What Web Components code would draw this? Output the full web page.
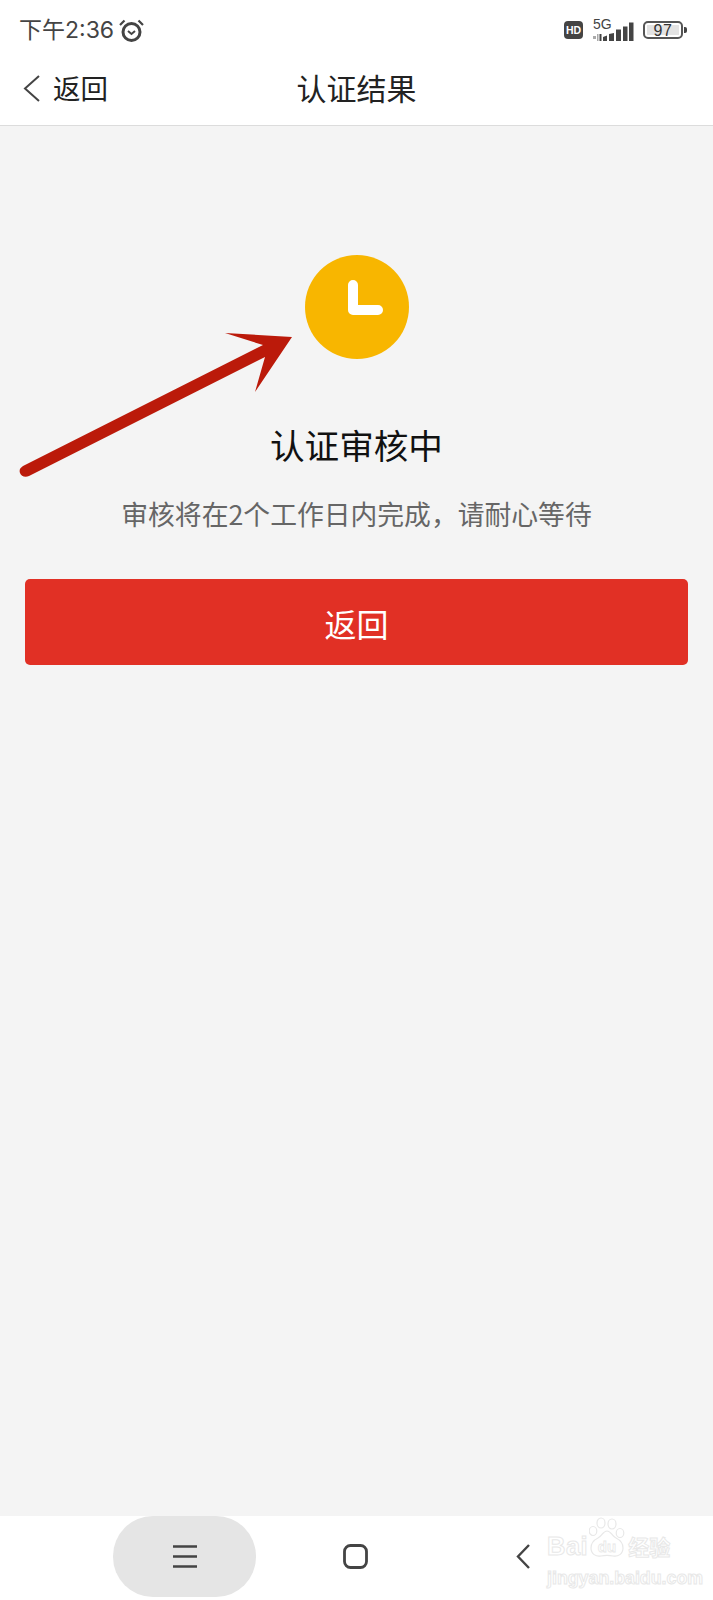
<!DOCTYPE html>
<html lang="zh">
<head>
<meta charset="utf-8">
<title>认证结果</title>
<style>
  html, body{
    margin: 0;
    padding: 0;
  }
  body{
    width: 713px;
    height: 1600px;
    overflow: hidden;
    font-family: "Noto Sans CJK SC", "Noto Sans", sans-serif;
  }
</style>
</head>
<body>
<app-screen>
  <status-bar time="下午2:36" battery="97"></status-bar>
  <nav-header heading="认证结果" back="返回"></nav-header>
  <result-panel heading="认证审核中" note="审核将在2个工作日内完成，请耐心等待">
    <primary-button>返回</primary-button>
  </result-panel>
  <bottom-nav></bottom-nav>
  <note-arrow></note-arrow>
</app-screen>

<script>
class AppScreen extends HTMLElement{
    constructor(){
        super();
        this.attachShadow({mode:"open"}).innerHTML = `
        <style>
          :host{
            display: flex;
            flex-direction: column;
            position: relative;
            width: 713px;
            height: 1600px;
            background: #f4f4f4;
          }
        </style>
        <slot></slot>`;
    }
}

class StatusBar extends HTMLElement{
    constructor(){
        super();
        this.attachShadow({mode:"open"}).innerHTML = `
        <style>
          :host{
            display: flex;
            justify-content: space-between;
            align-items: center;
            height: 60px;
            padding: 0 26px 0 19px;
            background: #fff;
            color: #444;
          }
          .left, .right{
            display: flex;
            align-items: center;
          }
          .time{
            font-family: Inter, "Noto Sans CJK SC", sans-serif;
            font-size: 23px;
            line-height: 60px;
            margin-top: -1px;
          }
          .alarm{
            margin-left: 5px;
            margin-top: 1px;
          }
          .hd{
            width: 19px;
            height: 18px;
            border-radius: 4px;
            background: #444;
            color: #fff;
            font: 700 10.500px/18px "Liberation Sans", sans-serif;
            text-align: center;
          }
          .net{
            display: block;
            margin: -3px 0 0 10px;
          }
          .battery{
            display: flex;
            align-items: center;
            margin-left: 9px;
          }
          .shell{
            box-sizing: border-box;
            width: 40px;
            height: 18px;
            padding: 2px;
            border: 2px solid #555;
            border-radius: 5px;
          }
          .level{
            height: 100%;
            background: #e3e3e3;
            font: 16px/11px "Liberation Sans", sans-serif;
            letter-spacing: .5px;
            color: #333;
            text-align: center;
          }
          .nub{
            width: 3px;
            height: 6px;
            margin-left: 1px;
            border-radius: 0 2px 2px 0;
            background: #444;
          }
        </style>
        <div class="left">
          <span class="time"></span>
          <svg class="alarm" width="25" height="24" viewBox="0 0 25 24" fill="none" stroke="#444">
            <circle cx="12.500" cy="13" r="8.500" stroke-width="3"/>
            <path d="M9 12l3.500 3 3.500-3" stroke-width="2"/>
            <path d="M1 6L5.500 1.500M24 6L19.500 1.500" stroke-width="2.200"/>
          </svg>
        </div>
        <div class="right">
          <div class="hd">HD</div>
          <svg class="net" width="41" height="26" viewBox="0 -3 41 26">
            <text x="0" y="9.500" font-size="14" font-family="Liberation Sans" fill="#444">5G</text>
            <path d="M0 17h3v3H0zM4 15h1.500v7H4z" fill="#aaa"/>
            <path d="M6.500 15h2v7h-2zM10 18l4-1.500V22h-4zM16 15l5-1v8h-5zM23 10.500h5V22h-5zM30 7.500h4.500V22H30zM36 3.500h4.500V22H36z" fill="#444"/>
          </svg>
          <div class="battery">
            <div class="shell"><div class="level"></div></div>
            <div class="nub"></div>
          </div>
        </div>`;
    }

    connectedCallback(){
        this.shadowRoot.querySelector(".time").textContent = this.getAttribute("time");
        this.shadowRoot.querySelector(".level").textContent = this.getAttribute("battery");
    }
}

class NavHeader extends HTMLElement{
    constructor(){
        super();
        this.attachShadow({mode:"open"}).innerHTML = `
        <style>
          :host{
            display: grid;
            grid-template-columns: 1fr auto 1fr;
            align-items: center;
            height: 53px;
            padding-bottom: 12px;
            background: #fff;
            border-bottom: 1px solid #dcdcdc;
            color: #222;
          }
          .back{
            display: flex;
            align-items: center;
            gap: 13px;
            padding-left: 23px;
            font-size: 27.500px;
          }
          .back svg{
            margin-top: 3px;
          }
          h1{
            margin: 0;
            font-size: 30px;
            font-weight: 400;
            color: #222;
          }
        </style>
        <div class="back">
          <svg width="17" height="27" viewBox="0 0 17 27" fill="none" stroke="#444" stroke-width="2">
            <path d="M16 1L2 13.500 16 26"/>
          </svg>
          <span class="label"></span>
        </div>
        <h1></h1>
        <div></div>`;
    }

    connectedCallback(){
        this.shadowRoot.querySelector(".label").textContent = this.getAttribute("back");
        this.shadowRoot.querySelector("h1").textContent = this.getAttribute("heading");
    }
}

class ResultPanel extends HTMLElement{
    constructor(){
        super();
        this.attachShadow({mode:"open"}).innerHTML = `
        <style>
          :host{
            display: flex;
            flex-direction: column;
            align-items: center;
            flex: 1;
            padding: 129px 25px 0;
          }
          svg{
            display: block;
          }
          h2{
            margin: 60px 0 0;
            font-size: 34.600px;
            line-height: 50px;
            font-weight: 400;
            color: #111;
          }
          p{
            margin: 25px 0 0;
            font-size: 26.800px;
            line-height: 40px;
            color: #666;
          }
          .action{
            align-self: stretch;
            margin-top: 45px;
          }
        </style>
        <svg width="104" height="104" viewBox="0 0 104 104">
          <circle cx="52" cy="52" r="52" fill="#f8b600"/>
          <path d="M48 30V55H73" fill="none" stroke="#fff" stroke-width="10" stroke-linecap="round" stroke-linejoin="round"/>
        </svg>
        <h2></h2>
        <p></p>
        <div class="action"><slot></slot></div>`;
    }

    connectedCallback(){
        this.shadowRoot.querySelector("h2").textContent = this.getAttribute("heading");
        this.shadowRoot.querySelector("p").textContent = this.getAttribute("note");
    }
}

class PrimaryButton extends HTMLElement{
    constructor(){
        super();
        this.attachShadow({mode:"open"}).innerHTML = `
        <style>
          :host{
            display: flex;
            justify-content: center;
            align-items: center;
            box-sizing: border-box;
            height: 86px;
            padding-top: 2px;
            border-radius: 5px;
            background: #e13025;
            color: #fff;
            font-size: 32px;
          }
        </style>
        <slot></slot>`;
    }
}

class BottomNav extends HTMLElement{
    constructor(){
        super();
        this.attachShadow({mode:"open"}).innerHTML = `
        <style>
          :host{
            display: block;
            position: relative;
            height: 84px;
            background: #fff;
          }
          .keys{
            display: grid;
            grid-template-columns: 143px 198px 1fr;
            height: 81px;
            padding-left: 113px;
          }
          .key{
            display: flex;
            justify-content: center;
            align-items: center;
          }
          .key.on{
            background: #e5e5e5;
            border-radius: 40px;
          }
          .key:last-child{
            justify-content: flex-start;
            padding-left: 62px;
          }
          .mark{
            position: absolute;
            left: 547px;
            top: 8px;
            width: 130px;
            height: 70px;
            color: #fff;
            -webkit-text-stroke: 1px #e8e8e8;
            font-family: "Liberation Sans", sans-serif;
          }
          .row{
            display: flex;
            align-items: center;
            height: 44px;
          }
          .bai{
            font-size: 25.500px;
            font-weight: 700;
            letter-spacing: .5px;
          }
          .paw{
            margin: -14px 3px 0 1px;
          }
          .jy{
            font-family: "Noto Sans CJK SC", sans-serif;
            font-size: 21px;
            font-weight: 700;
          }
          .url{
            font-size: 17.800px;
            font-weight: 700;
            line-height: 20px;
            white-space: nowrap;
          }
        </style>
        <div class="keys">
          <div class="key on">
            <svg width="24" height="23" viewBox="0 0 24 23" stroke="#444" stroke-width="2.500">
              <path d="M0 1.500H24M0 11.500H24M0 21.500H24"/>
            </svg>
          </div>
          <div class="key">
            <svg width="25" height="25" viewBox="0 0 25 25" fill="none" stroke="#444" stroke-width="2.800">
              <rect x="1.500" y="1.500" width="22" height="22" rx="6"/>
            </svg>
          </div>
          <div class="key">
            <svg width="14" height="25" viewBox="0 0 14 25" fill="none" stroke="#444" stroke-width="2.400">
              <path d="M13 1L2 12.500 13 24"/>
            </svg>
          </div>
        </div>
        <div class="mark">
          <div class="row">
            <span class="bai">Bai</span>
            <svg class="paw" width="36" height="44" viewBox="0 0 36 44" fill="#fff" stroke="#e8e8e8" stroke-width="1.200">
              <ellipse cx="4" cy="14" rx="3.800" ry="4.500"/>
              <ellipse cx="12" cy="6" rx="4" ry="5"/>
              <ellipse cx="23" cy="7" rx="4" ry="5"/>
              <ellipse cx="31" cy="16" rx="3.800" ry="4.500"/>
              <path d="M18 14c-4 0-5 5-9 7-4 2-7 5-7 10 0 6 5 9 10 8 3-.6 9-.6 12 0 5 1 10-2 10-8 0-5-3-8-7-10-4-2-5-7-9-7z"/>
              <text x="18" y="35" font-size="15" font-weight="700" text-anchor="middle" font-family="Liberation Sans" stroke-width=".8">du</text>
            </svg>
            <span class="jy">经验</span>
          </div>
          <div class="url">jingyan.baidu.com</div>
        </div>`;
    }
}

class NoteArrow extends HTMLElement{
    constructor(){
        super();
        this.attachShadow({mode:"open"}).innerHTML = `
        <style>
          :host{
            display: block;
            position: absolute;
            left: 15px;
            top: 325px;
            width: 285px;
            height: 155px;
            pointer-events: none;
          }
        </style>
        <svg width="285" height="155" viewBox="15 325 285 155">
          <path d="M225 333L292 337 255 392 265 357 29 476C25 478 21 476 20 473 19 470 20 468 23 466L263 345Z" fill="#bb1a0a"/>
        </svg>`;
    }
}

customElements.define("app-screen", AppScreen);
customElements.define("status-bar", StatusBar);
customElements.define("nav-header", NavHeader);
customElements.define("result-panel", ResultPanel);
customElements.define("primary-button", PrimaryButton);
customElements.define("bottom-nav", BottomNav);
customElements.define("note-arrow", NoteArrow);
</script>
</body>
</html>
